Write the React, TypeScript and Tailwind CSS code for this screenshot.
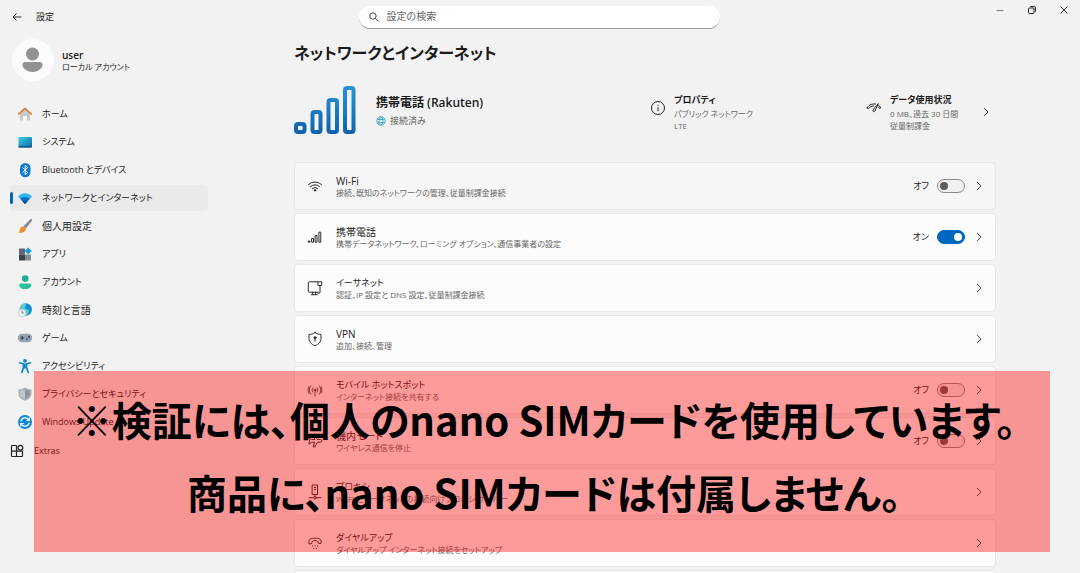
import React, { useState } from 'react';

type NavItem = { label: string; icon: React.ReactNode; compact?: boolean };

type Row = {
  title: string;
  detail: string;
  icon: React.ReactNode;
  toggle?: boolean;
  on?: boolean;
  muted?: boolean;
  compact?: boolean;
};

function HomeIcon() {
  return (
    <svg viewBox="0 0 16 16" className="size-4">
      <path d="M3 7.5 8 3l5 4.5V14a.6.6 0 0 1-.6.6H10V10H6v4.600H3.600A.6.6 0 0 1 3 14z" fill="#c9cbd0" />
      <path d="M6 10h4v4.600H6z" fill="#f7f7f8" />
      <path d="M1.800 8 8 2.500 14.200 8" fill="none" stroke="#d98644" strokeWidth="1.700" strokeLinecap="round" strokeLinejoin="round" />
    </svg>
  );
}

function SystemIcon() {
  return (
    <svg viewBox="0 0 16 16" className="size-4">
      <defs>
        <linearGradient id="sys" x1="0" y1="0" x2="1" y2="1">
          <stop offset="0" stopColor="#35d0e0" />
          <stop offset="1" stopColor="#0f68a8" />
        </linearGradient>
      </defs>
      <rect x="1.500" y="3" width="13.500" height="10.500" rx="1" fill="url(#sys)" />
      <path d="M1.500 12h13.500v.5a1 1 0 0 1-1 1h-11.500a1 1 0 0 1-1-1z" fill="#0c5585" />
    </svg>
  );
}

function BluetoothIcon() {
  return (
    <svg viewBox="0 0 16 16" className="size-4">
      <rect x="3" y="1" width="10.500" height="14.200" rx="5.200" fill="#0a78d6" />
      <path d="m5.500 5.500 5.200 5-2.500 2.200V3.500l2.500 2.200-5.200 5" fill="none" stroke="#fff" strokeWidth="1" />
    </svg>
  );
}

function NetworkIcon() {
  return (
    <svg viewBox="0 0 16 16" className="size-4">
      <path d="M1 6.500C4.800 2.300 11.200 2.300 15 6.500L8 14z" fill="#2fb2f2" />
      <path d="M3.400 9c2.500-2.600 6.700-2.600 9.200 0L8 14z" fill="#0a6fc0" />
      <path d="M5.600 11.400c1.300-1.300 3.500-1.300 4.800 0L8 14z" fill="#0b4d8f" />
    </svg>
  );
}

function BrushIcon() {
  return (
    <svg viewBox="0 0 16 16" className="size-4">
      <path d="M14.700 1.300c.7.6.3 1.500-.3 2.300L8.800 10.500 6.300 8.400l6.200-6.300c.7-.8 1.600-1.400 2.200-.8z" fill="#858b93" />
      <path d="M6 8.300 8.900 10.700c-.2 3-3.800 4.700-7.700 3.900 1.600-.8 1.300-2.200 2-3.900C3.800 9.300 4.800 8.500 6 8.300z" fill="#ee8c2d" />
    </svg>
  );
}

function AppsIcon() {
  return (
    <svg viewBox="0 0 16 16" className="size-4">
      <rect x="2" y="2.500" width="6" height="6" fill="#5f6771" />
      <rect x="2" y="8.500" width="6" height="6" fill="#3d434b" />
      <rect x="8" y="8.500" width="6" height="6" fill="#858b93" />
      <path d="m11.200 1.400 3.600 3.600-3.600 3.600L7.600 5z" fill="#1b9be0" />
    </svg>
  );
}

function AccountIcon() {
  return (
    <svg viewBox="0 0 16 16" className="size-4">
      <circle cx="8.200" cy="4.600" r="3.300" fill="#1fae93" />
      <path d="M3.800 9.400h8.800c.9 0 1.600.7 1.600 1.500 0 2.500-2.500 4.200-6 4.200s-6-1.700-6-4.200c0-.8.7-1.500 1.600-1.500z" fill="#2cbf9a" />
    </svg>
  );
}

function TimeIcon() {
  return (
    <svg viewBox="0 0 16 16" className="size-4">
      <circle cx="8.800" cy="7.500" r="6.200" fill="#1690c8" />
      <path d="M6 2c3-.8 4 .8 2.500 2.300S8 7 10.500 7.500s1.500 3.500-.5 5.500C5 14 2.400 10.500 2.700 6.500 3.200 4.200 4.500 2.600 6 2z" fill="#5ccbd8" />
      <circle cx="5" cy="11" r="3.800" fill="#f1f2f4" stroke="#b5bac0" strokeWidth=".6" />
      <path d="M5 8.800V11h1.700" fill="none" stroke="#5d646c" strokeWidth=".8" />
    </svg>
  );
}

function GameIcon() {
  return (
    <svg viewBox="0 0 16 16" className="size-4">
      <path d="M5 3.800h6a4.200 4.200 0 0 1 0 8.400H5a4.200 4.200 0 0 1 0-8.400z" fill="#98a3b0" />
      <path d="M5.200 6v4M3.200 8h4" stroke="#3c4650" strokeWidth="1.200" />
      <circle cx="10" cy="9.200" r="1.100" fill="#2878b8" />
      <circle cx="12" cy="6.800" r="1.100" fill="#3c4650" />
    </svg>
  );
}

function AccessibilityIcon() {
  return (
    <svg viewBox="0 0 16 16" className="size-4">
      <circle cx="8" cy="2.800" r="1.900" fill="#1486d0" />
      <path d="M2.500 4.800 6.500 6v3.500L4.800 14.500M13.500 4.800 9.500 6v3.500l1.700 5" fill="none" stroke="#1486d0" strokeWidth="1.700" strokeLinecap="round" strokeLinejoin="round" />
      <path d="M6.200 5.500h3.600v5H6.200z" fill="#1486d0" />
    </svg>
  );
}

function PrivacyIcon() {
  return (
    <svg viewBox="0 0 16 16" className="size-4">
      <path d="M8 1.500c1.900 1.300 4 1.900 6.500 2v4c0 3.500-2.500 5.800-6.500 7.200C4 13.300 1.500 11 1.500 7.500v-4c2.500-.1 4.600-.7 6.500-2z" fill="#a9afb5" />
      <path d="M8 3.200c1.500.9 3.100 1.400 5 1.500v2.800c0 2.600-1.800 4.400-5 5.600z" fill="#8d949b" />
      <path d="M8 3.200C6.500 4.100 4.900 4.600 3 4.700v2.800c0 2.600 1.800 4.400 5 5.600z" fill="#c0c5ca" />
    </svg>
  );
}

function UpdateIcon() {
  return (
    <svg viewBox="0 0 16 16" className="size-4">
      <circle cx="8" cy="8" r="7" fill="#0f86d6" />
      <path d="M3.800 7.300a4.300 4.300 0 0 1 7.800-1.500M12.200 8.700a4.300 4.300 0 0 1-7.800 1.500" fill="none" stroke="#fff" strokeWidth="1.300" />
      <path d="M12.200 3.600v2.900H9.300M3.800 12.400V9.500h2.900" fill="none" stroke="#fff" strokeWidth="1.200" />
    </svg>
  );
}

function ExtrasIcon() {
  return (
    <svg viewBox="0 0 14 14" className="size-3.5" fill="none" stroke="#222" strokeWidth="1.200">
      <path d="M6.500 1.500H2.300a.8.800 0 0 0-.8.800v9.400c0 .4.400.8.800.8h9.400c.4 0 .8-.4.800-.8V7.200h-11M6.500 1.500v11" />
      <circle cx="10.400" cy="3.700" r="2.400" />
    </svg>
  );
}

function LineIcon({ children }: { children: React.ReactNode }) {
  return (
    <svg viewBox="0 0 16 16" className="size-4 shrink-0" fill="none" stroke="#2b2b2b" strokeWidth="1" strokeLinecap="round" strokeLinejoin="round">
      {children}
    </svg>
  );
}

// compact: labels in kana or Latin, which are set one size down from kanji
const navItems: NavItem[] = [
  { label: 'ホーム', icon: <HomeIcon />, compact: true },
  { label: 'システム', icon: <SystemIcon />, compact: true },
  { label: 'Bluetooth とデバイス', icon: <BluetoothIcon />, compact: true },
  { label: 'ネットワークとインターネット', icon: <NetworkIcon />, compact: true },
  { label: '個人用設定', icon: <BrushIcon /> },
  { label: 'アプリ', icon: <AppsIcon />, compact: true },
  { label: 'アカウント', icon: <AccountIcon />, compact: true },
  { label: '時刻と言語', icon: <TimeIcon /> },
  { label: 'ゲーム', icon: <GameIcon />, compact: true },
  { label: 'アクセシビリティ', icon: <AccessibilityIcon />, compact: true },
  { label: 'プライバシーとセキュリティ', icon: <PrivacyIcon />, compact: true },
  { label: 'Windows Update', icon: <UpdateIcon />, compact: true },
];

const rows: Row[] = [
  {
    title: 'Wi-Fi',
    detail: '接続、既知のネットワークの管理、従量制課金接続',
    toggle: true,
    muted: true,
    icon: (
      <LineIcon>
        <path d="M1.500 6.500a9.300 9.300 0 0 1 13 0M3.400 8.600a6.600 6.600 0 0 1 9.200 0M5.300 10.600a3.900 3.900 0 0 1 5.400 0" />
        <circle cx="8" cy="12.300" r=".8" fill="#2b2b2b" />
      </LineIcon>
    ),
  },
  {
    title: '携帯電話',
    detail: '携帯データネットワーク、ローミング オプション、通信事業者の設定',
    toggle: true,
    on: true,
    icon: (
      <LineIcon>
        <path d="M1.700 12h1.200v1.200H1.700zM5 9.500h1.500v3.700H5zM8.500 6.500H10v6.700H8.500zM12.300 3.200h1.500v10h-1.500z" />
      </LineIcon>
    ),
  },
  {
    title: 'イーサネット',
    detail: '認証、IP 設定と DNS 設定、従量制課金接続',
    compact: true,
    icon: (
      <LineIcon>
        <path d="M10.500 1.800H2.300a1 1 0 0 0-1 1v8.400a1 1 0 0 0 1 1h8.500M4.200 14.700h6M5.700 12.200v2.500M8.700 12.200v2.500" />
        <path d="M11.300 1.800h3.400v3.700h-3.400zM13 5.500v7.500h-2.500" />
      </LineIcon>
    ),
  },
  {
    title: 'VPN',
    detail: '追加、接続、管理',
    icon: (
      <LineIcon>
        <path d="M8 1.500c1.800 1.300 3.700 1.900 6 2v4c0 3.300-2.200 5.700-6 7.200-3.800-1.500-6-3.900-6-7.200v-4c2.300-.1 4.200-.7 6-2z" />
        <circle cx="8" cy="6.700" r="1" fill="#2b2b2b" />
        <path d="M8 7.500v2.700" />
      </LineIcon>
    ),
  },
  {
    title: 'モバイル ホットスポット',
    detail: 'インターネット接続を共有する',
    toggle: true,
    compact: true,
    icon: (
      <LineIcon>
        <path d="M3.700 12.200a6.400 6.400 0 0 1 0-8.400M12.300 12.200a6.400 6.400 0 0 0 0-8.400M5.800 10.200a3.400 3.400 0 0 1 0-4.400M10.200 10.200a3.400 3.400 0 0 0 0-4.400M1.700 11.200a7 7 0 0 1 0-6.400M14.300 11.200a7 7 0 0 0 0-6.400M8 9V14" strokeWidth=".8" />
        <circle cx="8" cy="8" r=".9" />
      </LineIcon>
    ),
  },
  {
    title: '機内モード',
    detail: 'ワイヤレス通信を停止',
    toggle: true,
    icon: (
      <LineIcon>
        <path d="M6.200 2h1.500l2.800 4.500h3a1.300 1.300 0 0 1 0 2.700h-3L7.700 14H6.200l1.300-4.800H4.300L3 10.900H1.800l.8-3-.8-3H3l1.300 1.600h3.200z" />
      </LineIcon>
    ),
  },
  {
    title: 'プロキシ',
    detail: 'Wi-Fi とイーサネットの接続向けプロキシ サーバー',
    compact: true,
    icon: (
      <LineIcon>
        <path d="M5.500 1h5v9.500h-5zM7.300 3.500h1.400M7.300 5.500h1.400M8 10.500v2M2 13.700h4.500M9.500 13.700H14" />
        <circle cx="8" cy="13.700" r="1.200" />
      </LineIcon>
    ),
  },
  {
    title: 'ダイヤルアップ',
    detail: 'ダイヤルアップ インターネット接続をセットアップ',
    compact: true,
    icon: (
      <LineIcon>
        <path d="M2 8.700C1 3.800 4 3.200 8 3.200s7 .6 6 5.500l-2.800-.6c-.4-2-.7-2.500-3.200-2.500s-2.800.5-3.200 2.500z" />
        <path d="M5.500 11h.1M8 11h.1M10.500 11h.1M6.700 13.500h.1M9.300 13.500h.1" />
      </LineIcon>
    ),
  },
];

function Chevron() {
  return (
    <svg viewBox="0 0 8 10" className="h-2.5 w-2 shrink-0" fill="none" stroke="#444" strokeWidth="1">
      <path d="m2 1 4 4-4 4" />
    </svg>
  );
}

function Toggle({ label, initial }: { label: string; initial: boolean }) {
  const [on, setOn] = useState(initial);
  return (
    <label className="flex items-center gap-2 text-[9px]">
      <span>{on ? 'オン' : 'オフ'}</span>
      <input
        type="checkbox"
        role="switch"
        aria-label={label}
        checked={on}
        onChange={() => setOn(!on)}
        className="flex h-3.5 w-7 appearance-none items-center rounded-full border border-[#8a8a8a] bg-[#f0f0f0] px-0.5 before:size-2 before:rounded-full before:bg-[#5c5c5c] before:content-[''] checked:justify-end checked:border-[#0067c0] checked:bg-[#0067c0] checked:before:bg-white"
      />
    </label>
  );
}

function SettingRow({ row }: { row: Row }) {
  return (
    <li className={`flex h-12 items-center rounded-sm border border-[#e7e7e7] px-3 ${row.muted ? 'bg-[#f6f6f6]' : 'bg-[#fcfcfc]'}`}>
      {row.icon}
      <div className="ml-[13px] min-w-0 flex-1 pt-0.5">
        <h3 className={`leading-3 ${row.compact ? 'text-[9px]' : 'text-[10px]'}`}>{row.title}</h3>
        <p className="text-[8px] leading-3 text-[#666]">{row.detail}</p>
      </div>
      {row.toggle && <Toggle label={row.title} initial={!!row.on} />}
      <button aria-label={`${row.title}を開く`} className="ml-2.5">
        <Chevron />
      </button>
    </li>
  );
}

function TitleBar() {
  return (
    <header className="flex h-[34px] shrink-0 items-center">
      <button aria-label="戻る" className="ml-3">
        <svg viewBox="0 0 10 10" className="size-2.5" fill="none" stroke="#333" strokeWidth="1">
          <path d="M9.500 5H1M4.500 1.500 1 5l3.500 3.500" />
        </svg>
      </button>
      <span className="ml-3.5 text-[9px]">設定</span>
      <div className="flex flex-1 justify-center">
        <label className="ml-7 flex h-[23px] w-[361px] items-center overflow-hidden rounded-full border-b border-[#9a9a9a] bg-white px-2.5">
          <svg viewBox="0 0 10 10" className="size-2.5" fill="none" stroke="#444" strokeWidth="1">
            <circle cx="4" cy="4" r="3.200" />
            <path d="m6.300 6.300 3.200 3.200" />
          </svg>
          <input type="search" aria-label="設定の検索" placeholder="設定の検索" className="ml-2 flex-1 text-[10px] outline-none placeholder:text-[#666]" />
        </label>
      </div>
      <div className="flex gap-6 self-start pt-1.5 pr-3">
        <button aria-label="最小化">
          <svg viewBox="0 0 8 8" className="size-2" stroke="#777" fill="none">
            <path d="M0.500 4.500h7" />
          </svg>
        </button>
        <button aria-label="元に戻す">
          <svg viewBox="0 0 8 8" className="size-2" stroke="#222" fill="none">
            <rect x=".5" y="2" width="5.500" height="5.500" rx="1" />
            <path d="M2.200.6h4a1.200 1.200 0 0 1 1.200 1.200v4" />
          </svg>
        </button>
        <button aria-label="閉じる">
          <svg viewBox="0 0 8 8" className="size-2" stroke="#333" fill="none">
            <path d="m.5.500 7 7M7.500.500l-7 7" />
          </svg>
        </button>
      </div>
    </header>
  );
}

function Sidebar() {
  return (
    <aside className="w-52 shrink-0 pt-px">
      <div className="flex items-center gap-2 pt-1 pl-3">
        <svg viewBox="0 0 42 42" className="size-[42px]">
          <circle cx="21" cy="21" r="21" fill="#fbfbfb" />
          <circle cx="20.500" cy="15" r="6.500" fill="#929292" />
          <path d="M13 23h15c1.500 0 2.500 1 2.500 2.300 0 4-4 7.700-10 7.700s-10-3.700-10-7.700C10.500 24 11.500 23 13 23z" fill="#929292" />
        </svg>
        <div className="pt-0.5">
          <p className="text-[10px] leading-3 font-semibold">user</p>
          <p className="text-[8px] leading-3">ローカル アカウント</p>
        </div>
      </div>
      <nav className="mt-5 flex flex-col gap-0.5 pl-2.5">
        {navItems.map((item, i) => (
          <a
            key={item.label}
            href="#"
            aria-current={i === 3 ? 'page' : undefined}
            className={`flex h-[26px] items-center rounded-sm ${i === 3 ? 'bg-[#eaeaea]' : ''}`}
          >
            <span className={`mr-1 h-3 w-[3px] rounded-full ${i === 3 ? 'bg-[#0067c0]' : ''}`} />
            {item.icon}
            <span className={`ml-[9px] ${item.compact ? 'text-[9px]' : 'text-[10px]'}`}>{item.label}</span>
          </a>
        ))}
        <a href="#" className="flex h-7 items-center gap-2.5 text-[9px]">
          <ExtrasIcon />
          Extras
        </a>
      </nav>
    </aside>
  );
}

function Summary() {
  return (
    <section className="mt-4 flex h-[60px] items-center">
      <svg viewBox="0 0 62 50" className="h-[50px] w-[62px]" fill="none" strokeWidth="4">
        <defs>
          <linearGradient id="bars" x1="0" y1="0" x2="0" y2="50" gradientUnits="userSpaceOnUse">
            <stop offset="0" stopColor="#2a93d8" />
            <stop offset="1" stopColor="#0c60ac" />
          </linearGradient>
        </defs>
        <g stroke="url(#bars)">
          <rect x="2" y="38" width="8.500" height="8" rx="2" />
          <rect x="18.500" y="26" width="8" height="20" rx="2" />
          <rect x="34.500" y="14" width="8.500" height="32" rx="2" />
          <rect x="51" y="2" width="8.500" height="44" rx="2" />
        </g>
      </svg>
      <div className="ml-5 flex-1">
        <h2 className="text-xs leading-5 font-semibold">携帯電話 (Rakuten)</h2>
        <p className="flex items-center gap-1 text-[9px] leading-4 text-[#666]">
          <svg viewBox="0 0 10 10" className="size-2.5" fill="none" stroke="#38a9bf" strokeWidth=".9">
            <circle cx="5" cy="5" r="4.200" />
            <ellipse cx="5" cy="5" rx="1.900" ry="4.200" />
            <path d="M1.200 3.500h7.600M1.200 6.500h7.600" />
          </svg>
          接続済み
        </p>
      </div>
      <div className="flex w-[216px] gap-2 pt-0.5">
        <svg viewBox="0 0 16 16" className="mt-2 size-4" fill="none" stroke="#222">
          <circle cx="8" cy="8" r="6.500" />
          <path d="M8 7.200v4M8 4.700v1.200" />
        </svg>
        <div>
          <h2 className="text-[9px] leading-4 font-semibold">プロパティ</h2>
          <p className="text-[8px] leading-3 text-[#666]">
            パブリック ネットワーク
            <br />
            LTE
          </p>
        </div>
      </div>
      <div className="flex w-[130px] items-center pt-0.5">
        <svg viewBox="0 0 16 16" className="mr-2 mb-2 size-4" fill="none" stroke="#222" strokeLinecap="round" strokeWidth="1">
          <path d="M1.200 8C2 5.500 5 3.600 9.500 4M1.200 8l1.500.5C4 6.800 5.500 6 7.500 6M12.500 5.200c1 .7 1.800 1.700 2.200 2.800l-1.400.4-1-1.400" />
          <path d="M12 4 9 11c-.5 1.200-2.300.8-2-.7C7.300 9 10 6 12 4z" />
        </svg>
        <div className="flex-1">
          <h2 className="text-[9px] leading-4 font-semibold">データ使用状況</h2>
          <p className="text-[8px] leading-3 text-[#666]">
            0 MB、過去 30 日間
            <br />
            従量制課金
          </p>
        </div>
        <button aria-label="データ使用状況を開く" className="mr-1.5">
          <Chevron />
        </button>
      </div>
    </section>
  );
}

export default function App() {
  return (
    <div className="relative flex h-screen flex-col overflow-hidden bg-[#f2f2f2] font-['Open_Sans','Noto_Sans_CJK_JP',sans-serif] text-[#1b1b1b] [font-feature-settings:'palt']">
      <TitleBar />
      <div className="flex min-h-0 flex-1">
        <Sidebar />
        <main className="min-w-0 flex-1 pt-[7px] pr-[84px] pl-[86px]">
          <h1 className="text-base leading-6 font-semibold">ネットワークとインターネット</h1>
          <Summary />
          <ul className="mt-[21px] flex flex-col gap-[3px]">
            {rows.map((row) => (
              <SettingRow key={row.title} row={row} />
            ))}
            <li className="h-12 rounded-sm border border-[#e7e7e7] bg-[#fcfcfc]" />
          </ul>
        </main>
      </div>

      {/* notice laid over the window */}
      <div className="absolute right-[30px] left-[34px] top-[371px] flex h-[181px] flex-col items-center bg-[#ff0000]/[.385] pt-3 pl-1 font-['Noto_Sans_CJK_JP',sans-serif] text-[40px] leading-[73px] font-bold whitespace-nowrap text-black">
        <p>※検証には、個人のnano SIMカードを使用しています。</p>
        <p>商品に、nano SIMカードは付属しません。</p>
      </div>
    </div>
  );
}
